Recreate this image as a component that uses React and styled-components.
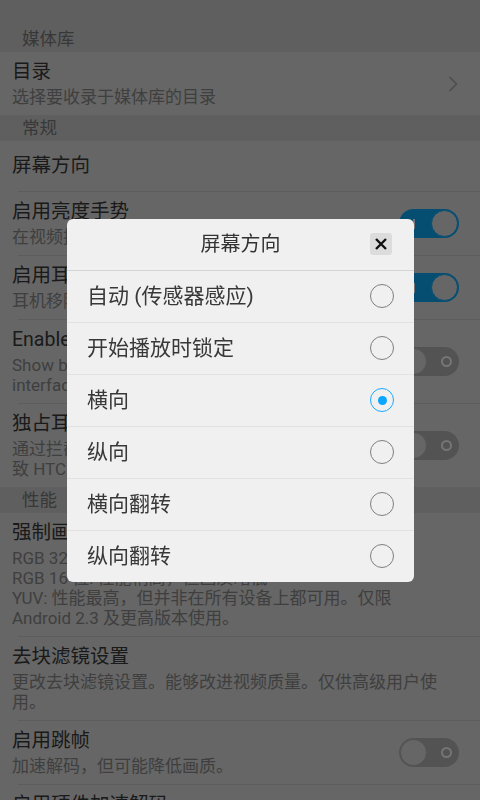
import React from "react";
import styled, { createGlobalStyle } from "styled-components";

const GlobalStyle = createGlobalStyle`
  html, body {
    margin: 0;
    padding: 0;
  }
  body {
    width: 480px;
    height: 800px;
    overflow: hidden;
    background: #dedede;
    font-family: Roboto, "Noto Sans CJK SC", sans-serif;
  }
`;

const settings = [
  { kind: "category", label: "媒体库", first: true },
  { title: "目录", sub: "选择要收录于媒体库的目录", control: "chevron" },
  { kind: "category", label: "常规" },
  { title: "屏幕方向" },
  { title: "启用亮度手势", sub: "在视频播放时滑动调节亮度", control: "on" },
  { title: "启用耳机检测", sub: "耳机移除时暂停播放", control: "on" },
  {
    title: "Enable back button",
    sub: ["Show back button in the player", "interface"],
    control: "off",
  },
  {
    title: "独占耳机按键",
    sub: ["通过拦截耳机按键来独占控制，这可能会导", "致 HTC 设备出现问题"],
    control: "off",
  },
  { kind: "category", label: "性能" },
  {
    title: "强制画面色度",
    sub: [
      "RGB 32 位: 默认色度",
      "RGB 16 位: 性能稍高，但画质略低",
      "YUV: 性能最高，但并非在所有设备上都可用。仅限 Android 2.3 及更高版本使用。",
    ],
  },
  {
    title: "去块滤镜设置",
    sub: "更改去块滤镜设置。能够改进视频质量。仅供高级用户使用。",
  },
  { title: "启用跳帧", sub: "加速解码，但可能降低画质。", control: "off" },
  { title: "启用硬件加速解码", sub: "硬件加速解码", control: "off" },
];

const orientations = [
  "自动 (传感器感应)",
  "开始播放时锁定",
  "横向",
  "纵向",
  "横向翻转",
  "纵向翻转",
];

const Toggle = ({ on }) => (
  <Track $on={on}>
    {on ? <Mark /> : <Knob $on={on} />}
    {on ? <Knob $on={on} /> : <Ring />}
  </Track>
);

const Chevron = () => (
  <ChevronIcon width="10" height="16" viewBox="0 0 10 16">
    <polyline points="1.5,1 8.5,8 1.5,15" fill="none" stroke="#a8a8a8" strokeWidth="1.6" />
  </ChevronIcon>
);

const SettingRow = ({ item }) => {
  const subs = Array.isArray(item.sub) ? item.sub : item.sub ? [item.sub] : [];
  return (
    <Row $single={!item.sub}>
      <Texts>
        <Title>{item.title}</Title>
        {subs.map((s) => (
          <Sub key={s}>{s}</Sub>
        ))}
      </Texts>
      {item.control === "chevron" && <Chevron />}
      {item.control === "on" && <Toggle on />}
      {item.control === "off" && <Toggle on={false} />}
    </Row>
  );
};

const App = () => {
  const selected = 2;
  return (
    <>
      <GlobalStyle />
      <Page>
        {settings.map((item, i) => {
          if (item.kind === "category") {
            return (
              <Category key={item.label} $first={item.first}>
                {item.label}
              </Category>
            );
          }
          const next = settings[i + 1];
          return (
            <React.Fragment key={item.title}>
              <SettingRow item={item} />
              {next && next.kind !== "category" && <Divider />}
            </React.Fragment>
          );
        })}
      </Page>

      <Scrim>
        <Dialog>
          <DialogHeader>
            <span />
            <DialogTitle>屏幕方向</DialogTitle>
            <CloseButton aria-label="close">
              <svg width="12" height="12" viewBox="0 0 12 12">
                <path d="M1 1 L11 11 M11 1 L1 11" stroke="#111" strokeWidth="2.4" />
              </svg>
            </CloseButton>
          </DialogHeader>
          {orientations.map((label, i) => (
            <Option key={label} $last={i === orientations.length - 1}>
              <OptionText>{label}</OptionText>
              <Radio $checked={i === selected} />
            </Option>
          ))}
        </Dialog>
      </Scrim>
    </>
  );
};

export default App;

const Page = styled.div`
  width: 480px;
  height: 800px;
  overflow: hidden;
  background: #dedede;
  display: flex;
  flex-direction: column;
`;

const Category = styled.div`
  flex-shrink: 0;
  background: #cfcfcf;
  color: #7a7a7a;
  font-size: 17.5px;
  line-height: 26px;
  height: 26px;
  padding: ${(p) => (p.$first ? "26px" : "0")} 0 0 22px;
`;

const Row = styled.div`
  flex-shrink: 0;
  display: flex;
  align-items: center;
  padding: ${(p) => (p.$single ? "13px" : "8px")} 21px
    ${(p) => (p.$single ? "13px" : "8px")} 12px;
`;

const Texts = styled.div`
  flex: 1;
  min-width: 0;
  display: flex;
  flex-direction: column;
  margin-right: 13px;
`;

const Title = styled.div`
  color: #3a3a3a;
  font-size: 19.5px;
  line-height: 24px;
  margin-bottom: 3px;
  white-space: nowrap;
  &:last-child {
    margin-bottom: 0;
  }
`;

const Sub = styled.div`
  color: #8a8a8a;
  font-size: 17px;
  line-height: 20px;
`;

const Divider = styled.div`
  flex-shrink: 0;
  height: 1px;
  margin-left: 18px;
  background: #c8c8c8;
`;

const ChevronIcon = styled.svg`
  flex-shrink: 0;
  margin-right: 1px;
`;

const Track = styled.div`
  flex-shrink: 0;
  width: 60px;
  height: 29px;
  border-radius: 15px;
  box-sizing: border-box;
  padding: 0 1px;
  background: ${(p) => (p.$on ? "#0babf9" : "#b6b6b6")};
  display: flex;
  align-items: center;
  justify-content: space-between;
`;

const Knob = styled.div`
  width: 27px;
  height: 27px;
  border-radius: 50%;
  box-sizing: border-box;
  background: #dedede;
  border: 1.5px solid ${(p) => (p.$on ? "#0babf9" : "#b6b6b6")};
`;

const Ring = styled.div`
  width: 11px;
  height: 11px;
  border-radius: 50%;
  box-sizing: border-box;
  border: 2px solid #ffffff;
  margin-right: 6px;
`;

const Mark = styled.div`
  width: 2px;
  height: 10px;
  background: #ffffff;
  margin-left: 13px;
`;

const Scrim = styled.div`
  position: fixed;
  inset: 0;
  background: rgba(0, 0, 0, 0.54);
  display: flex;
  align-items: center;
  justify-content: center;
`;

const Dialog = styled.div`
  width: 347px;
  margin-left: 1px;
  background: #f0f0f0;
  border-radius: 6px;
  overflow: hidden;
`;

const DialogHeader = styled.div`
  height: 51px;
  display: grid;
  grid-template-columns: 1fr auto 1fr;
  align-items: center;
  border-bottom: 1px solid #d4d4d4;
`;

const DialogTitle = styled.div`
  color: #333333;
  font-size: 20px;
  line-height: 24px;
`;

const CloseButton = styled.button`
  justify-self: end;
  margin-right: 22px;
  width: 22px;
  height: 22px;
  padding: 0;
  border: none;
  border-radius: 3px;
  background: #dcdcdc;
  display: flex;
  align-items: center;
  justify-content: center;
`;

const Option = styled.div`
  height: 51px;
  display: flex;
  align-items: center;
  justify-content: space-between;
  padding: 0 20px;
  border-bottom: ${(p) => (p.$last ? "none" : "1px solid #e2e2e2")};
`;

const OptionText = styled.div`
  color: #383838;
  font-size: 21px;
  line-height: 26px;
`;

const Radio = styled.div`
  position: relative;
  width: 24px;
  height: 24px;
  box-sizing: border-box;
  border-radius: 50%;
  border: 1.5px solid ${(p) => (p.$checked ? "#1ea8ff" : "#7f7f7f")};
  display: flex;
  align-items: center;
  justify-content: center;
  &::after {
    content: "";
    display: ${(p) => (p.$checked ? "block" : "none")};
    width: 9px;
    height: 9px;
    border-radius: 50%;
    background: #0aa6ff;
  }
`;
